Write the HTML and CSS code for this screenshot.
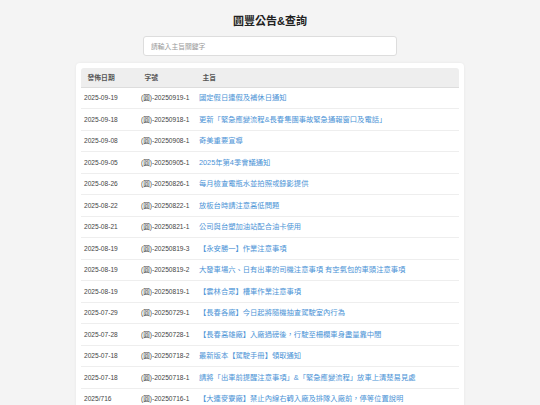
FILE: index.html
```html
<!DOCTYPE html>
<html lang="zh-Hant">
<head>
    <meta charset="UTF-8">
    <title>圓豐公告&amp;查詢</title>
    <meta name="viewport" content="width=device-width, initial-scale=1.0">
    <link rel="stylesheet" href="styles.css">
</head>
<body>
    <h1 class="title">圓豐公告&amp;查詢</h1>
    <div class="search">
        <input type="text" class="search-input" placeholder="請輸入主旨關鍵字">
    </div>

    <div class="card">
        <table class="notice-table">
            <thead>
                <tr>
                    <th class="col-date">發佈日期</th>
                    <th class="col-no">字號</th>
                    <th>主旨</th>
                </tr>
            </thead>
            <tbody id="notice-body"></tbody>
        </table>
    </div>

    <script>
        let notices = [
            ["2025-09-19", "(圓)-20250919-1", "國定假日連假及補休日通知"],
            ["2025-09-18", "(圓)-20250918-1", "更新「緊急應變流程&長春集團事故緊急通報窗口及電話」"],
            ["2025-09-08", "(圓)-20250908-1", "奇美重要宣導"],
            ["2025-09-05", "(圓)-20250905-1", "2025年第4季會議通知"],
            ["2025-08-26", "(圓)-20250826-1", "每月檢查電瓶水並拍照或錄影提供"],
            ["2025-08-22", "(圓)-20250822-1", "放板台時請注意高低問題"],
            ["2025-08-21", "(圓)-20250821-1", "公司與台塑加油站配合油卡使用"],
            ["2025-08-19", "(圓)-20250819-3", "【永安勝一】作業注意事項"],
            ["2025-08-19", "(圓)-20250819-2", "大發車場六、日有出車的司機注意事項 有空氣包的車頭注意事項"],
            ["2025-08-19", "(圓)-20250819-1", "【雲林合眾】槽車作業注意事項"],
            ["2025-07-29", "(圓)-20250729-1", "【長春各廠】今日起將隨機抽查駕駛室內行為"],
            ["2025-07-28", "(圓)-20250728-1", "【長春高雄廠】入廠過磅後，行駛至柵欄車身盡量靠中間"],
            ["2025-07-18", "(圓)-20250718-2", "最新版本【駕駛手冊】領取通知"],
            ["2025-07-18", "(圓)-20250718-1", "請將「出車前提醒注意事項」&「緊急應變流程」放車上清楚易見處"],
            ["2025/716", "(圓)-20250716-1", "【大連麥寮廠】禁止內線右轉入廠及排隊入廠前，停等位置說明"]
        ];

        let body = document.getElementById("notice-body");
        notices.forEach((n) => {
            let tr = document.createElement("tr");
            tr.innerHTML = "<td>" + n[0] + "</td><td>" + n[1] + "</td><td><a href=\"#\">" + n[2] + "</a></td>";
            body.appendChild(tr);
        });
    </script>
</body>
</html>
```

FILE: styles.css
```css
body {
    margin: 0;
    padding-top: 14px;
    background-color: #f4f4f4;
    font-family: "Liberation Sans", Arial, "Noto Sans CJK TC", sans-serif;
    color: #333;
}
.title {
    margin: 0;
    text-align: center;
    font-size: 11px;
    line-height: 14px;
    color: #222;
}
.search {
    display: flex;
    justify-content: center;
    margin-top: 8px;
}
.search-input {
    box-sizing: border-box;
    width: 254px;
    height: 20px;
    padding: 0 7px;
    border: 1px solid #ddd;
    border-radius: 3px;
    background-color: #fff;
    font-family: inherit;
    font-size: 6.8px;
    outline: none;
}
.search-input::placeholder {
    color: #999;
}

.card {
    width: 388px;
    box-sizing: border-box;
    margin: 7px auto 0;
    padding: 5px;
    background-color: #fff;
    border-radius: 4px;
    box-shadow: 0 0 3px rgba(0, 0, 0, 0.06);
}
.notice-table {
    width: 100%;
    border-collapse: collapse;
    font-size: 6.6px;
    line-height: 10px;
}
.notice-table th {
    text-align: left;
    font-weight: 600;
    color: #555;
    background-color: #eee;
    padding: 4.5px 6.5px;
    border-bottom: 1px solid #ddd;
    font-size: 6.8px;
}
.notice-table th:first-child { border-top-left-radius: 3px; }
.notice-table th:last-child { border-top-right-radius: 3px; }
.col-date { width: 44px; }
.col-no { width: 45px; }
.notice-table td {
    padding: 5.3px 3px 5.2px;
    border-bottom: 1px solid #eee;
    color: #444;
    white-space: nowrap;
}
.notice-table a {
    color: #4b93d6;
    font-size: 7.3px;
    text-decoration: none;
}
```
